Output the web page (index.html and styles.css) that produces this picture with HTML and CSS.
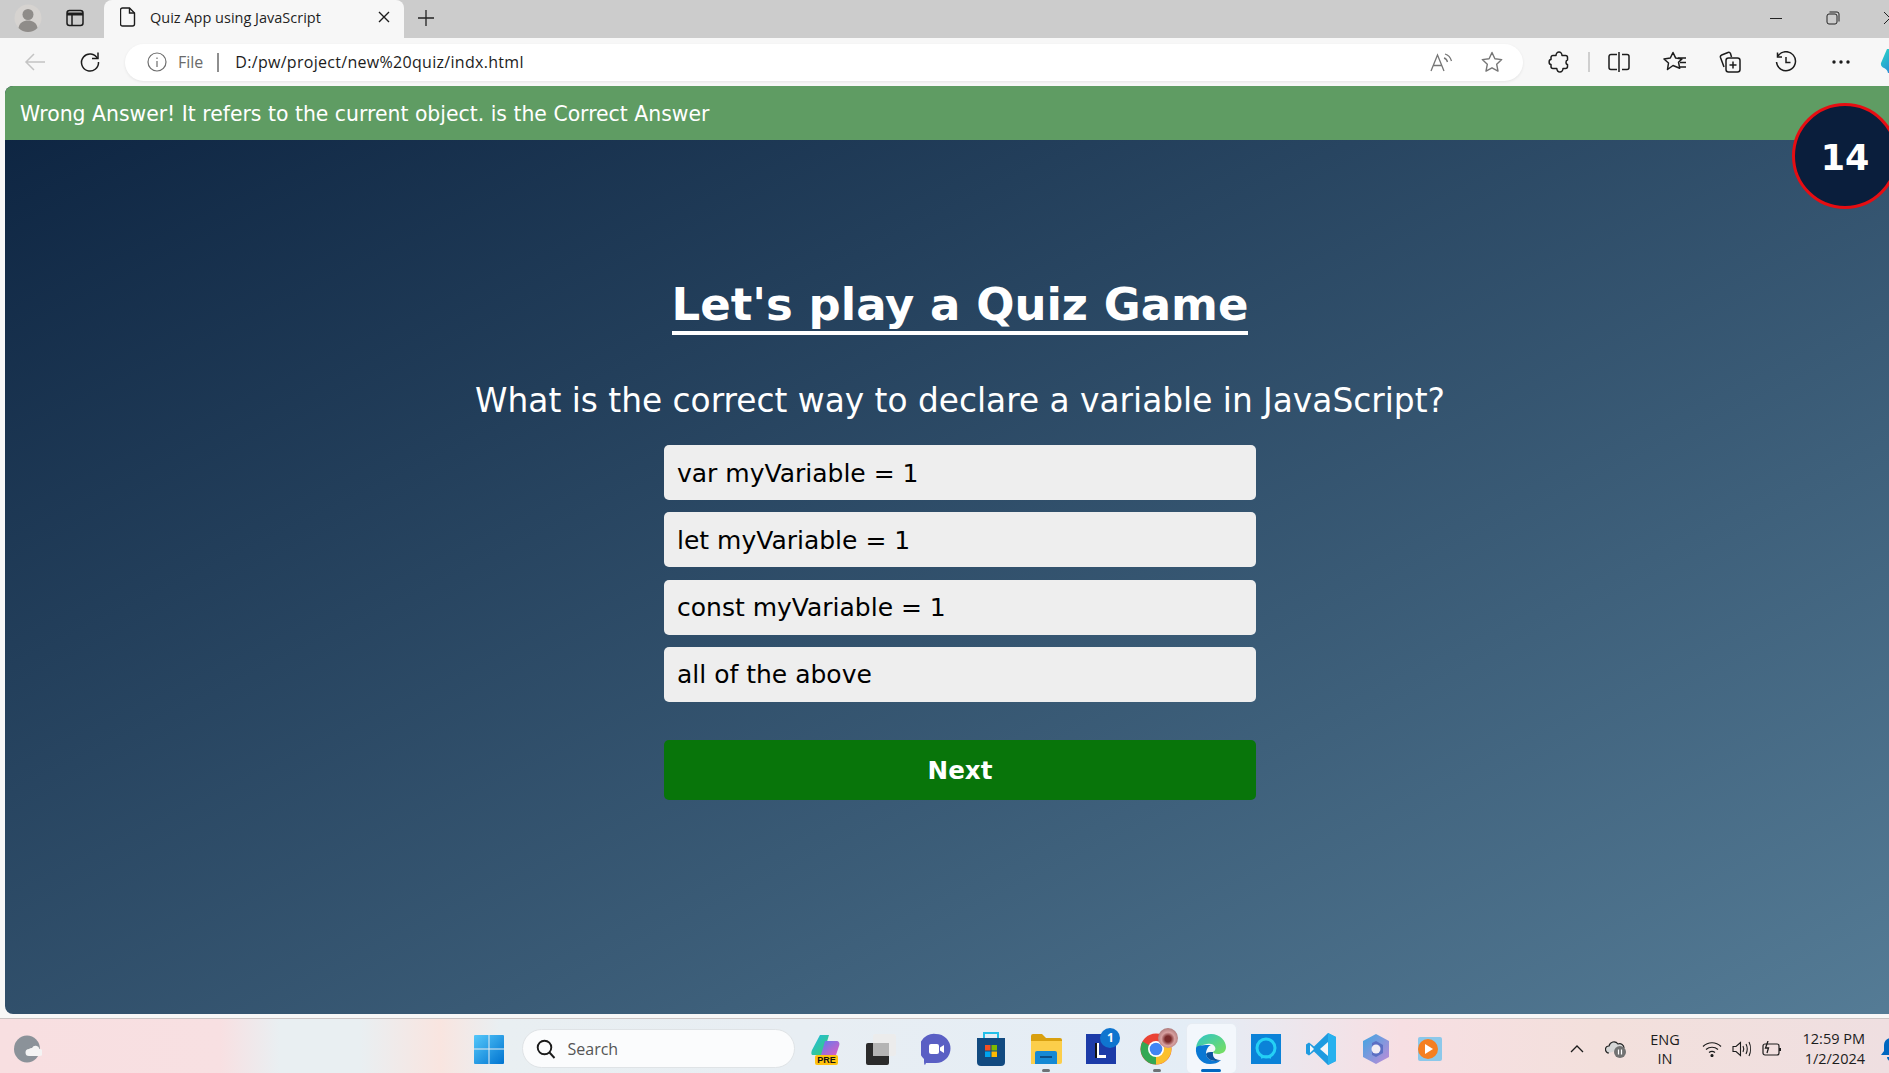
FILE: index.html
```html
<!DOCTYPE html>
<html lang="en">
<head>
<meta charset="utf-8">
<title>Quiz App using JavaScript</title>
<link rel="stylesheet" href="styles.css">
</head>
<body>
<div class="tabstrip">
  <span class="avatar"><svg width="28" height="28" viewBox="0 0 28 28"><circle cx="14" cy="14" r="13.5" fill="#d6d3d0"/><circle cx="14" cy="10.5" r="5.5" fill="#8f8c89"/><path d="M4.5 24c1-5.5 5-7.5 9.5-7.5s8.500 2 9.500 7.500a13.500 13.500 0 0 1-19 0z" fill="#8f8c89"/></svg></span>
  <span class="strip-btn"><svg width="18" height="18" viewBox="0 0 18 18" fill="none" stroke="#1c1c1c" stroke-width="1.500"><rect x="1" y="1.500" width="16" height="15" rx="2.500"/><path d="M1 5h16" stroke-width="3"/><path d="M6 5v11"/></svg></span>
  <div class="tab">
    <svg width="16" height="20" viewBox="0 0 16 20" fill="none" stroke="#1c1c1c" stroke-width="1.400"><path d="M2.500 1h7l5 5v11a2 2 0 0 1-2 2h-10a2 2 0 0 1-2-2v-14a2 2 0 0 1 2-2z"/><path d="M9.500 1v5h5"/></svg>
    <span class="tab-title">Quiz App using JavaScript</span>
    <svg class="tab-close" width="12" height="12" viewBox="0 0 12 12" stroke="#1c1c1c" stroke-width="1.400"><path d="M1 1l10 10M11 1l-10 10"/></svg>
  </div>
  <svg class="new-tab" width="18" height="18" viewBox="0 0 18 18" stroke="#222" stroke-width="1.300"><path d="M9 1v16M1 9h16"/></svg>
  <div class="window-controls">
    <svg width="14" height="14" viewBox="0 0 14 14" stroke="#222" stroke-width="1"><path d="M1 7.500h12"/></svg>
    <svg width="14" height="14" viewBox="0 0 14 14" fill="none" stroke="#222" stroke-width="1"><rect x="1" y="3" width="10" height="10" rx="2"/><path d="M3.500 1h7.500a2 2 0 0 1 2 2v7.500"/></svg>
    <svg width="14" height="14" viewBox="0 0 14 14" stroke="#222" stroke-width="1"><path d="M1 1l12 12M13 1l-12 12"/></svg>
  </div>
</div>

<div class="toolbar">
  <span class="nav-btn"><svg width="22" height="20" viewBox="0 0 22 20" fill="none" stroke="#c4c4c4" stroke-width="1.500"><path d="M21 10H2M10 2l-8 8 8 8"/></svg></span>
  <span class="nav-btn nav-reload"><svg width="22" height="22" viewBox="0 0 22 22" fill="none" stroke="#1c1c1c" stroke-width="1.500"><path d="M18.500 7.500A8.500 8.500 0 1 0 19.500 11"/><path d="M19 1.500v6h-6"/></svg></span>
  <div class="address">
    <svg class="info" width="20" height="20" viewBox="0 0 20 20" fill="none" stroke="#6e6e6e" stroke-width="1.200"><circle cx="10" cy="10" r="9"/><path d="M10 9v6M10 5.500v1.500"/></svg>
    <span class="scheme">File</span>
    <span class="addr-sep"></span>
    <span class="url">D:/pw/project/new%20quiz/indx.html</span>
    <svg class="read" width="24" height="20" viewBox="0 0 24 20" fill="none" stroke="#767676" stroke-width="1.300"><path d="M1 19L7.500 3 14 19M3.500 13.500h8"/><path d="M14 6c2 .500 3 2 3.500 4M15 2c3.500 1 5.500 3.500 6.500 7"/></svg>
    <svg class="star" width="22" height="22" viewBox="0 0 22 22" fill="none" stroke="#767676" stroke-width="1.400"><path d="M11 1.500l2.900 6.300 6.800.8-5 4.700 1.300 6.800L11 16.800l-6 3.300 1.300-6.800-5-4.700 6.800-.8z" stroke-linejoin="round"/></svg>
  </div>
  <div class="tools">
    <span class="tool"><svg width="22" height="22" viewBox="0 0 22 22" fill="none" stroke="#1c1c1c" stroke-width="1.500" stroke-linejoin="round"><path d="M8 4.500C8 2.500 9.500 1 11 1s3 1.500 3 3.500h3.500a2 2 0 0 1 2 2V9c-2 .200-2 4.500 0 4.500v2a2 2 0 0 1-2 2H15c0 2-1.500 3.500-3 3.500s-3-1.500-3.200-3.500H5a2 2 0 0 1-2-2v-2c-2.500 0-2.500-5 0-5V6.500a2 2 0 0 1 2-2z"/></svg></span>
    <span class="tool-sep"></span>
    <span class="tool tool-split"><svg width="22" height="22" viewBox="0 0 22 22" fill="none" stroke="#1c1c1c" stroke-width="1.500"><path d="M9 3.500H3a2 2 0 0 0-2 2v11a2 2 0 0 0 2 2h6M14 3.500h5a2 2 0 0 1 2 2v11a2 2 0 0 1-2 2h-5M11 1v20"/></svg></span>
    <span class="tool"><svg width="24" height="22" viewBox="0 0 24 22" fill="none" stroke="#1c1c1c" stroke-width="1.500" stroke-linejoin="round"><path d="M10 1.500l2.700 5.600 6.300.8-3.500 3.300 1.200 6L10 14.500l-5.500 4 1-6.500L1 8l6.300-1z"/><path d="M15 7h8M17 11.500h6M16 16h7" stroke-width="1.300"/></svg></span>
    <span class="tool"><svg width="22" height="22" viewBox="0 0 22 22" fill="none" stroke="#1c1c1c" stroke-width="1.500"><path d="M5 16L1.500 6.500a2 2 0 0 1 1.200-2.500L9 1.500a2 2 0 0 1 2.500 1L12.500 6"/><rect x="7" y="7" width="14" height="14" rx="2.500" fill="#f7f7f7"/><path d="M14 10.500v7M10.500 14h7"/></svg></span>
    <span class="tool"><svg width="22" height="22" viewBox="0 0 22 22" fill="none" stroke="#1c1c1c" stroke-width="1.500"><path d="M3 5a9.500 9.500 0 1 1-1.500 6"/><path d="M2.500 1.500v4.500H7M11 6v5.500h4.500"/></svg></span>
    <span class="tool"><svg width="18" height="4" viewBox="0 0 18 4" fill="#1c1c1c"><circle cx="2" cy="2" r="1.700"/><circle cx="9" cy="2" r="1.700"/><circle cx="16" cy="2" r="1.700"/></svg></span>
    <span class="tool tool-copilot"><svg width="24" height="26" viewBox="0 0 24 26"><defs><linearGradient id="ec" x1="0" y1="0" x2="1" y2="1"><stop offset="0" stop-color="#2bd9c4"/><stop offset="1" stop-color="#2a6fe0"/></linearGradient></defs><path d="M7 0h15v24H8C7 18 0 20 1 14z" fill="url(#ec)"/></svg></span>
  </div>
</div>

<main class="page">
  <div class="banner">Wrong Answer! It refers to the current object. is the Correct Answer</div>
  <div class="timer">14</div>
  <section class="quiz">
    <h1 class="quiz-title">Let's play a Quiz Game</h1>
    <p class="question">What is the correct way to declare a variable in JavaScript?</p>
    <ul class="options">
      <li class="option">var myVariable = 1</li>
      <li class="option">let myVariable = 1</li>
      <li class="option">const myVariable = 1</li>
      <li class="option">all of the above</li>
    </ul>
    <button class="next">Next</button>
  </section>
</main>

<footer class="taskbar">
  <span class="weather"><svg width="28" height="30" viewBox="0 0 28 30"><ellipse cx="13" cy="15" rx="13" ry="13.500" fill="#8b9299"/><path d="M18 14a4 4 0 0 1 7.500 1 3.500 3.500 0 0 1 0 7H15a3.500 3.500 0 0 1 0-7 4 4 0 0 1 3-1z" fill="#f4f4f4"/></svg></span>
  <span class="start"><svg width="30" height="30" viewBox="0 0 30 30"><defs><linearGradient id="win" x1="0" y1="0" x2="1" y2="1"><stop offset="0" stop-color="#55c8fa"/><stop offset="1" stop-color="#0073d0"/></linearGradient></defs><path d="M1 1h13.500v13.500H0V2a1 1 0 0 1 1-1zM15.500 1H29a1 1 0 0 1 1 1v12.500H15.500zM0 15.500h14.500V30H1a1 1 0 0 1-1-1zM15.500 15.500H30V29a1 1 0 0 1-1 1H15.500z" fill="url(#win)"/></svg></span>
  <div class="search">
    <svg width="20" height="20" viewBox="0 0 20 20" fill="none" stroke="#1a1a1a" stroke-width="1.900"><circle cx="8.500" cy="8.500" r="6.800"/><path d="M13.500 13.500l5 5.500"/></svg>
    <span>Search</span>
  </div>
  <div class="apps">
    <span class="app"><svg width="32" height="32" viewBox="0 0 32 32"><defs><linearGradient id="cp1" x1="0" y1="0" x2="1" y2="1"><stop offset="0" stop-color="#1fb9e8"/><stop offset="1" stop-color="#3ecf6c"/></linearGradient><linearGradient id="cp2" x1="0" y1="0" x2="1" y2="1"><stop offset="0" stop-color="#5d7cf0"/><stop offset="1" stop-color="#e25cc0"/></linearGradient></defs><path d="M10 2h9l-6 20H3C1 22 1 20 2 17z" fill="url(#cp1)"/><path d="M15 8h11c3 0 4 2 3 5l-3 9H11z" fill="url(#cp2)"/></svg><b class="pre">PRE</b></span>
    <span class="app"><svg width="32" height="32" viewBox="0 0 32 32"><rect x="1" y="10" width="23" height="22" rx="2" fill="#2b2b2b"/><rect x="8" y="1" width="23" height="22" rx="2" fill="#ececec"/><path d="M8 10h16v13H8z" fill="#b4b4b4"/></svg></span>
    <span class="app"><svg width="30" height="32" viewBox="0 0 30 32"><path d="M15 1a14.500 14.500 0 0 1 0 29H5l-1 2c-1 0-1-4-1-6A14.500 14.500 0 0 1 15 1z" fill="#5a5fc4"/><rect x="8" y="11" width="10" height="10" rx="2" fill="#fff"/><path d="M19 14.500l4-2.500v8l-4-2.500z" fill="#fff"/></svg></span>
    <span class="app"><svg width="30" height="34" viewBox="0 0 30 34"><path d="M8 6V1h14v5" fill="none" stroke="#24bfe8" stroke-width="2"/><path d="M1 6h28v24a4 4 0 0 1-4 4H5a4 4 0 0 1-4-4z" fill="#124a80"/><rect x="9" y="13" width="5.500" height="5.500" fill="#f25022"/><rect x="15.500" y="13" width="5.500" height="5.500" fill="#7fba00"/><rect x="9" y="19.500" width="5.500" height="5.500" fill="#00a4ef"/><rect x="15.500" y="19.500" width="5.500" height="5.500" fill="#ffb900"/></svg></span>
    <span class="app"><svg width="32" height="30" viewBox="0 0 32 30"><path d="M1 2a2 2 0 0 1 2-2h9l4 4h14a2 2 0 0 1 2 2v6H1z" fill="#d9a00f"/><path d="M1 7h31v21a2 2 0 0 1-2 2H1z" fill="#fcce4a"/><path d="M5 19a2 2 0 0 1 2-2h18a2 2 0 0 1 2 2v11H5z" fill="#1589d4"/><path d="M10 23h12" stroke="#0b4f86" stroke-width="2"/></svg><i class="dot"></i></span>
    <span class="app"><svg width="30" height="30" viewBox="0 0 30 30"><rect width="30" height="30" fill="#1c3ba8"/><path d="M9 9h4v12h7v3H9z" fill="#fff"/><path d="M9 9h2v15H9z" fill="#111"/></svg><b class="badge">1</b></span>
    <span class="app"><svg width="32" height="32" viewBox="0 0 32 32"><circle cx="16" cy="16" r="15.500" fill="#ea4335"/><path d="M16 16L29.500 8.500A15.500 15.500 0 0 1 16 31.500z" fill="#fbc02d"/><path d="M16 16L16 31.500A15.500 15.500 0 0 1 2.500 8.500z" fill="#34a853"/><circle cx="16" cy="16" r="8" fill="#fff"/><circle cx="16" cy="16" r="6.300" fill="#4285f4"/></svg><span class="profile"></span><i class="dot"></i></span>
    <span class="app app-active"><svg width="32" height="32" viewBox="0 0 32 32"><defs><linearGradient id="ed1" x1="0" y1="0" x2="1" y2="1"><stop offset="0" stop-color="#2ec4c9"/><stop offset="1" stop-color="#7be05a"/></linearGradient></defs><path d="M1 15C2 6 9 1 16 1c9 0 15 7 15 13 0 5-4 7-8 7-3 0-5-1-5-2 2-1 3-3 2-5-1-3-5-4-8-3-6 1-10 4-11 4z" fill="url(#ed1)"/><path d="M1 15c-1 8 5 16 14 16 4 0 8-1 11-4-6 2-14 1-15-6 0-4 2-8 5-9-7 0-14 0-15 3z" fill="#0a78d4"/><path d="M11 21c1 7 9 8 15 6-4 0-9-1-8-8-3 0-6 0-7 2z" fill="#0c559e"/></svg><i class="active-bar"></i></span>
    <span class="app"><svg width="30" height="30" viewBox="0 0 30 30"><rect width="30" height="30" fill="#0b82d8"/><circle cx="15" cy="14" r="9" fill="#0b82d8" stroke="#25d0f5" stroke-width="3"/><path d="M10 24l5-2 5 2" fill="none" stroke="#25d0f5" stroke-width="1.500"/></svg></span>
    <span class="app"><svg width="30" height="34" viewBox="0 0 30 34"><path d="M22 1l8 4v24l-8 4-14-13.500-5 4-3-2v-9l3-2 5 4z" fill="#1e9be0"/><path d="M22 1l8 4v24l-8 4z" fill="#28b1ee"/><path d="M22 10l-8 7 8 7z" fill="#f4f6f8"/><path d="M4 13l4 4-4 4z" fill="#f4f6f8"/></svg></span>
    <span class="app"><svg width="28" height="32" viewBox="0 0 28 32"><defs><linearGradient id="m3" x1="0" y1="0" x2="1" y2="1"><stop offset="0" stop-color="#3ea6e2"/><stop offset="1" stop-color="#c08ad8"/></linearGradient></defs><path d="M14 1l13 7v16l-13 7-13-7V8z" fill="url(#m3)"/><path d="M14 8l7 4v8l-7 4-4-2V10z" fill="#5b6fc4"/><circle cx="14" cy="16" r="4.500" fill="#f3eef4"/></svg></span>
    <span class="app app-media"><svg width="26" height="26" viewBox="0 0 26 26"><rect x="2" y="1" width="24" height="24" rx="2" fill="#8cc8ea"/><circle cx="12" cy="13" r="10" fill="#f57f20"/><path d="M9 8l8 5-8 5z" fill="#fff"/></svg></span>
  </div>
  <div class="tray">
    <svg class="chev" width="14" height="8" viewBox="0 0 14 8" fill="none" stroke="#1c1c1c" stroke-width="1.300"><path d="M1 7l6-6 6 6"/></svg>
    <svg class="onedrive" width="22" height="20" viewBox="0 0 22 20"><path d="M4 14a3.500 3.500 0 0 1 0-7C5 3 10 1 13 5c3-1 6 1 6 4" fill="#d6d6d6" stroke="#222" stroke-width="1.200"/><circle cx="15" cy="13" r="6" fill="#727272"/><path d="M13.500 10.500v5M16.500 10.500v5" stroke="#fff" stroke-width="1.200"/></svg>
    <span class="lang">ENG<br>IN</span>
    <svg class="wifi" width="20" height="16" viewBox="0 0 20 16" fill="none" stroke="#1c1c1c" stroke-width="1.200"><path d="M1 5.500c5-5 13-5 18 0M4 8.500c3.500-3 8.500-3 12 0M7 11.500c2-1.500 4-1.500 6 0"/><circle cx="10" cy="14.500" r="1" fill="#1c1c1c"/></svg>
    <svg class="sound" width="20" height="16" viewBox="0 0 20 16" fill="none" stroke="#1c1c1c" stroke-width="1.100"><path d="M1 5.500h3l4.500-4v13l-4.500-4H1zM11 5c1 2 1 4 0 6M14 3c1.500 3 1.500 7 0 10M17 1c2 4 2 10 0 14"/></svg>
    <svg class="battery" width="21" height="16" viewBox="0 0 21 16" fill="none" stroke="#1c1c1c" stroke-width="1.200"><rect x="1" y="3" width="16" height="11" rx="2"/><path d="M18 7v3" stroke-width="2"/><path d="M6 0L3.500 7h3L5 12" stroke-width="1.300"/></svg>
    <span class="clock">12:59 PM<br>1/2/2024</span>
    <svg class="bell" width="20" height="24" viewBox="0 0 20 24"><path d="M10 1c4 0 7 3 7 7v6l3 4H0l3-4V8c0-4 3-7 7-7z" fill="#0067c0"/><path d="M6 20h8a4 4 0 0 1-8 0z" fill="#0067c0"/></svg>
  </div>
</footer>
</body>
</html>
```

FILE: styles.css
```css
* { box-sizing: border-box; }
html, body { margin: 0; height: 100%; overflow: hidden; }
body {
  width: 1889px;
  height: 1073px;
  display: flex;
  flex-direction: column;
  background: #f7f7f7;
  font-family: "Open Sans", "Liberation Sans", sans-serif;
}
svg { display: block; flex: none; }

/* tab strip */
.tabstrip { flex: none; height: 38px; display: flex; align-items: center; padding-bottom: 2px; background: #cccccc; }
.avatar { width: 28px; margin-left: 14px; flex: none; }
.strip-btn { width: 18px; margin-left: 24px; flex: none; }
.tab {
  width: 300px; height: 38px; margin: 0 0 -2px 20px; padding: 0 0 4px 16px; flex: none;
  display: flex; align-items: center;
  background: #f7f7f7; border-radius: 8px 8px 0 0;
}
.tab-title { margin-left: 14px; width: 228px; flex: none; font-size: 14.500px; color: #1f1f1f; white-space: nowrap; }
.new-tab { margin-left: 13px; }
.window-controls { margin-left: 1334px; flex: none; display: flex; gap: 43px; }

/* toolbar */
.toolbar { flex: none; height: 48px; display: flex; align-items: center; background: #f7f7f7; padding-left: 10px; }
.nav-btn { width: 50px; flex: none; display: flex; justify-content: center; }
.nav-reload { width: 60px; }
.address {
  width: 1398px; height: 37px; margin-left: 5px; padding-left: 22px; flex: none;
  display: flex; align-items: center;
  background: #fff; border-radius: 19px; box-shadow: 0 1px 3px rgba(0,0,0,.08);
}
.scheme { margin-left: 11px; font-size: 16px; color: #6a6a6a; }
.addr-sep { width: 2px; height: 19px; margin: 0 16px 0 14px; background: #8e8e8e; }
.url { font-size: 16px; color: #1c1c1c; letter-spacing: .3px; white-space: nowrap; }
.read { margin-left: auto; }
.star { margin: 0 20px 0 27px; }
.tools { display: flex; align-items: center; margin-left: 13px; flex: none; }
.tool { width: 46px; display: flex; justify-content: center; flex: none; }
.tool + .tool { margin-left: 9.500px; }
.tool-sep { width: 2px; height: 20px; margin: 0 6px; background: #cfcfcf; flex: none; }
.tool-copilot { width: 28px; margin-left: 14px !important; }

/* page */
.page {
  position: relative; flex: 1; width: 1910px; margin-left: 5px; min-height: 0;
  border-radius: 8px 0 0 8px; overflow: hidden;
  background: linear-gradient(to bottom right, #0c2340, #557c96);
  color: #fff;
  font-family: "DejaVu Sans", sans-serif;
}
.banner {
  height: 54px; padding: 2px 0 0 15px; display: flex; align-items: center;
  background: #5f9c63; font-size: 20.400px;
}
.timer {
  position: absolute; top: 17px; left: 1787px; width: 106px; height: 106px;
  display: flex; align-items: center; justify-content: center;
  background: #0a1e3c; border: 3px solid #e60d12; border-radius: 50%;
  font-size: 35px; font-weight: 700; padding-top: 3px;
}
.quiz { display: flex; flex-direction: column; align-items: center; padding-top: 138px; }
.quiz-title {
  margin: 0; font-size: 45px; line-height: 53px; font-weight: 700;
  border-bottom: 4px solid #fff;
}
.question { margin: 46px 0 0; font-size: 32.800px; line-height: 40px; }
.options { list-style: none; margin: 24px 0 0; padding: 0; width: 592px; display: flex; flex-direction: column; gap: 12.300px; }
.option {
  height: 55px; padding: 1px 0 0 13px; display: flex; align-items: center;
  background: #eeeeee; border-radius: 5px; color: #000; font-size: 25px;
}
.next {
  width: 592px; height: 60px; margin-top: 38px; padding: 2px 0 0; border: 0; border-radius: 5px;
  background: #08750a; color: #fff; font-family: inherit; font-size: 24.600px; font-weight: 700;
}

/* taskbar */
.taskbar {
  flex: none; height: 55px; margin-top: 4px; padding-top: 5px; display: flex; align-items: center;
  border-top: 1px solid #c9c3c3;
  background: linear-gradient(90deg, #f8dfe1 0, #f8e0e2 220px, #e9eff2 280px, #e9eff2 360px, #f9e5e0 440px, #e9eff2 500px, #e8eef3 800px, #e4edf6 1200px, #f7dfe3 1400px, #f3e0dc 1600px, #efdfe1 1889px);
}
.weather { width: 28px; margin-left: 14px; flex: none; }
.start { width: 55px; margin-left: 419.500px; display: flex; justify-content: center; flex: none; }
.search {
  width: 273px; height: 39px; margin-left: 5px; padding-left: 13px; flex: none;
  display: flex; align-items: center; gap: 12px;
  background: #fbfcfd; border: 1px solid #dfe3e6; border-radius: 20px;
  font-size: 16px; color: #555;
}
.apps { display: flex; margin-left: 3.500px; flex: none; }
.app { position: relative; width: 55.100px; height: 49px; display: flex; align-items: center; justify-content: center; flex: none; }
.app-active { width: 49px; margin: 0 3px; background: #f3f7fc; border-radius: 5px; box-shadow: 0 0 0 1px #e6ecf3; }
.app-media { margin-left: -2px; }
.pre { position: absolute; left: 17px; top: 31px; width: 23px; height: 10px; background: #ffc20e; border-radius: 2px; font: 700 9px/10px "Liberation Sans", sans-serif; color: #111; text-align: center; }
.badge { position: absolute; left: 27px; top: 4px; width: 20px; height: 20px; background: #0f75cf; border-radius: 50%; color: #fff; font: 700 12px/20px "Open Sans", sans-serif; text-align: center; }
.profile { position: absolute; left: 29px; top: 4px; width: 20px; height: 20px; border-radius: 50%; background: radial-gradient(circle at 50% 55%, #7a2a2a 0 20%, #d8a0a0 45%, #8a5a5a 100%); }
.dot { position: absolute; left: 24px; bottom: 1px; width: 8px; height: 3px; background: #6f7276; border-radius: 2px; }
.active-bar { position: absolute; left: 14px; bottom: 1px; width: 20px; height: 3px; background: #0067c0; border-radius: 2px; }
.tray { display: flex; align-items: center; flex: none; font-size: 14.500px; color: #1c1c1c; }
.chev { margin-left: 113px; }
.onedrive { margin-left: 21px; }
.lang { width: 50px; margin-left: 13px; text-align: center; line-height: 19px; }
.wifi { margin-left: 12px; }
.sound { margin-left: 10px; }
.battery { margin-left: 10px; }
.clock { width: 70px; margin-left: 12px; text-align: right; line-height: 20px; white-space: nowrap; }
.bell { margin-left: 16px; }
```
